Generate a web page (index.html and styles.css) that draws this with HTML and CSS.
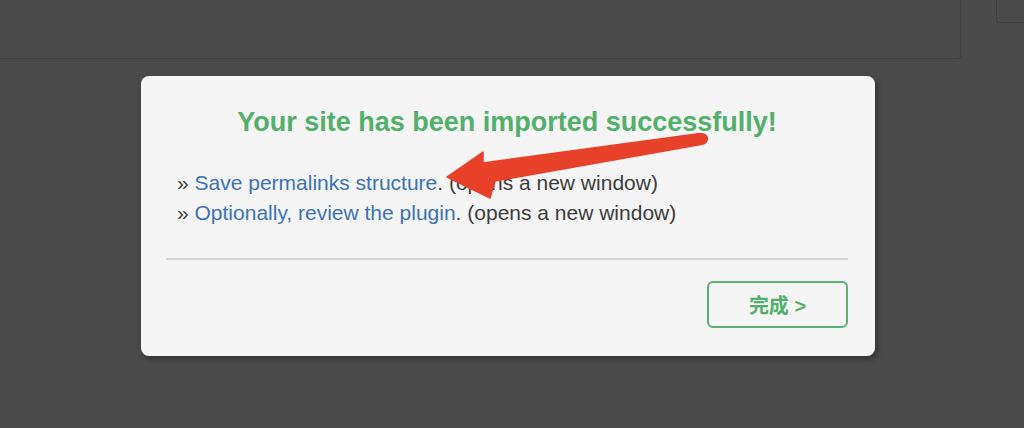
FILE: index.html
```html
<!DOCTYPE html>
<html>
<head>
	<meta name="viewport" content="width=device-width, initial-scale=1.0">
	<title>Import selesai</title>
	<link rel="stylesheet" href="styles.css">
</head>
<body>
<div class="top">
	<div class="panel"></div>
	<div class="side"></div>
</div>
<div class="modal">
	<h2 class="judul">Your site has been imported successfully!</h2>
	<ul class="langkah">
		<li>&raquo; <a href="#">Save permalinks structure</a>. (opens a new window)</li>
		<li>&raquo; <a href="#">Optionally, review the plugin</a>. (opens a new window)</li>
	</ul>
	<hr class="garis">
	<div class="aksi">
		<button class="selesai">完成 &gt;</button>
	</div>
</div>
<svg class="panah" width="1024" height="428" viewBox="0 0 1024 428">
	<path d="M447,177 L483,152 L483,163 L700,133.5 Q707,133.5 707.5,139 Q707,144 701,144.5 L495,181 L490,198 Z" fill="#e8412a" stroke="#e8412a" stroke-width="1.5" stroke-linejoin="round"/>
</svg>
</body>
</html>
```

FILE: styles.css
```css
body{
	margin:0;
	background:#4a4a4a;
	height:428px;
	overflow:hidden;
	position:relative;
	font-family:"Liberation Sans", Arial, sans-serif;
}
.top{
	display:flex;
	align-items:flex-start;
	height:59px;
}
.panel{
	width:960px;
	height:58px;
	border-right:1px solid #3f3f3f;
	border-bottom:1px solid #3f3f3f;
	border-bottom-right-radius:3px;
}
.side{
	margin-left:35px;
	flex:1;
	height:22px;
	border-left:1px solid #3f3f3f;
	border-bottom:1px solid #3f3f3f;
	border-bottom-left-radius:3px;
}
.modal{
	margin:17px 0 0 141px;
	width:734px;
	height:280px;
	box-sizing:border-box;
	background:#f5f5f5;
	border-radius:8px;
	box-shadow:2px 3px 6px rgba(0,0,0,0.35);
	padding:29px 27px 0 25px;
}
.judul{
	margin:0;
	text-align:center;
	color:#52b06a;
	font-size:27px;
	line-height:34px;
	font-weight:bold;
}
.langkah{
	list-style:none;
	margin:29px 0 0 11px;
	padding:0;
	font-size:21px;
	line-height:30px;
	color:#3c3c3c;
}
.langkah a{
	color:#3b72b8;
	text-decoration:none;
}
.garis{
	margin:30px 0 0 0;
	border:none;
	height:2px;
	background:#d6d6d6;
}
.aksi{
	display:flex;
	justify-content:flex-end;
	margin-top:21px;
}
.selesai{
	width:141px;
	height:47px;
	background:transparent;
	border:2px solid #5cb071;
	border-radius:6px;
	color:#52b06a;
	font:bold 20px "Liberation Sans", "Noto Sans CJK SC", sans-serif;
}
.panah{
	position:absolute;
	left:0;
	top:0;
	pointer-events:none;
}
```
